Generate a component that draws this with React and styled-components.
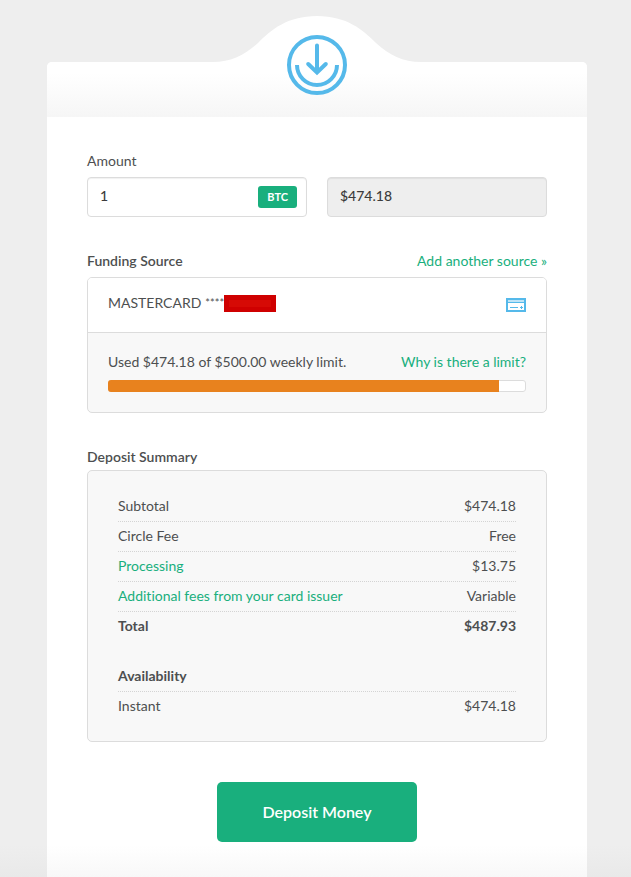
import React, { useState } from 'react';
import styled, { createGlobalStyle } from 'styled-components';

const GlobalStyle = createGlobalStyle`
  * {
    box-sizing: border-box;
  }

  body {
    margin: 0;
    background: #eee;
    color: #4d4f50;
    font-family: Lato, 'Open Sans', sans-serif;
    font-size: 14px;
    font-variant-ligatures: none;
    line-height: 20px;
  }
`;

const Page = styled.div`
  min-height: 100vh;
  padding: 62px 44px 0 47px;
  background: linear-gradient(to top, #e9e9e9, #eee 32px);
`;

const Card = styled.main`
  max-width: 540px;
  min-height: calc(100vh - 62px);
  margin: 0 auto;
  background: linear-gradient(to top, #f8f8f8, #fff 32px);
  border-radius: 5px 5px 0 0;
`;

const CardHeader = styled.header`
  position: relative;
  height: 55px;
  background: linear-gradient(#fff 20%, #f6f6f6);
  border-radius: 5px 5px 0 0;
`;

const Emblem = styled.svg`
  position: absolute;
  top: -46px;
  left: 50%;
  transform: translateX(-50%);
`;

const DepositForm = styled.form`
  display: flex;
  flex-direction: column;
  padding: 34px 40px;
`;

const AmountRow = styled.div`
  display: grid;
  grid-template-columns: repeat(2, minmax(0, 1fr));
  align-items: end;
  gap: 20px;
  margin-bottom: 34px;
`;

const Label = styled.label`
  display: block;
  margin-bottom: 6px;
`;

const Field = styled.div`
  display: flex;
  align-items: center;
  height: 40px;
  padding-right: 9px;
  border: 1px solid #dcdcdc;
  border-radius: 4px;
  background: ${({ $muted }) => ($muted ? '#eee' : '#fff')};
  box-shadow: inset 0 1px 1px rgba(0, 0, 0, 0.06);
`;

const FieldInput = styled.input`
  flex: 1;
  min-width: 0;
  padding: 0 0 2px 12px;
  border: 0;
  outline: 0;
  background: transparent;
  color: #3c3c3c;
  font: inherit;
  font-weight: 500;
`;

const CurrencyButton = styled.button`
  height: 22px;
  padding: 0 9px;
  border: 0;
  border-radius: 3px;
  background: #19af7d;
  color: #fff;
  font: inherit;
  font-size: 11px;
  font-weight: 700;
`;

const SectionHead = styled.div`
  display: flex;
  justify-content: space-between;
  margin-bottom: ${({ $gap }) => $gap}px;
`;

const SectionTitle = styled.h2`
  margin: 0;
  font-size: 14px;
  font-weight: 600;
`;

const TextLink = styled.a`
  color: #19af7d;
  text-decoration: none;
`;

const Panel = styled.section`
  margin-bottom: ${({ $gap }) => $gap}px;
  border: 1px solid #dcdcdc;
  border-radius: 5px;
  background: #f8f8f8;
  overflow: hidden;
`;

const SourceRow = styled.div`
  display: flex;
  align-items: center;
  justify-content: space-between;
  height: 55px;
  padding: 0 20px;
  border-bottom: 1px solid #dcdcdc;
  background: #fff;
`;

const SourceName = styled.div`
  display: flex;
  align-items: center;
  padding-bottom: 4px;
`;

const MaskedDigits = styled.span`
  margin-left: 4px;
  font-size: 11px;
`;

const Redacted = styled.span`
  width: 52px;
  height: 17px;
  border: 5px solid #cf0000;
  background: #d60a05;
`;

const LimitBox = styled.div`
  padding: 19px 20px 20px;
`;

const LimitText = styled.div`
  display: flex;
  justify-content: space-between;
  margin-bottom: 8px;
`;

const Meter = styled.div`
  height: 12px;
  border: 1px solid #dcdcdc;
  border-radius: 3px;
  background: #fff;
`;

const MeterFill = styled.div`
  height: 12px;
  margin: -1px 0 0 -1px;
  border-radius: 3px 0 0 3px;
  background: #e8821e;
`;

const SummaryPanel = styled(Panel)`
  padding: 20px 30px;
`;

const SummaryTable = styled.table`
  width: 100%;
  border-collapse: collapse;

  & + & {
    margin-top: 20px;
  }

  tr + tr {
    border-top: 1px dotted #d4d4d4;
  }
`;

const Cell = styled.td`
  height: 30px;
  padding: 0;
  font-weight: ${({ $strong }) => ($strong ? 700 : 400)};
  text-align: ${({ $end }) => ($end ? 'right' : 'left')};
`;

const SubmitButton = styled.button`
  align-self: center;
  width: 200px;
  height: 60px;
  border: 0;
  border-radius: 5px;
  background: #19af7d;
  color: #fff;
  font: inherit;
  font-size: 16px;
  font-weight: 600;
  cursor: pointer;
`;

const usedPercent = 94;

const fees = [
  { label: 'Subtotal', value: '$474.18' },
  { label: 'Circle Fee', value: 'Free' },
  { label: 'Processing', value: '$13.75', href: '#processing' },
  { label: 'Additional fees from your card issuer', value: 'Variable', href: '#issuer-fees' },
  { label: 'Total', value: '$487.93', strong: true },
];

const availability = [
  { label: 'Availability', value: '', strong: true },
  { label: 'Instant', value: '$474.18' },
];

const DepositEmblem = () => (
  <Emblem width="208" height="84" viewBox="0 0 208 84" fill="none" aria-hidden="true">
    <path
      d="M0 46.5V46C18 46 32 39 45 27C58 14 74 0 104 0C134 0 150 14 163 27C176 39 190 46 208 46V46.5Z"
      fill="#fff"
    />
    <g stroke="#55b9ea" strokeWidth="4">
      <circle cx="104" cy="49" r="28" />
      <path d="M84 49A20 20 0 0 0 124 49" />
      <path d="M104 29.5V56M95.2 48L104 56.5L112.8 48" strokeLinecap="round" />
    </g>
  </Emblem>
);

const CardIcon = () => (
  <svg width="20" height="14" viewBox="0 0 20 14" fill="none" stroke="#55b9ea" aria-hidden="true">
    <path d="M1 1H19V4H1Z" fill="#bfe4f7" stroke="none" />
    <path d="M1 1H19V13H1Z" strokeWidth="2" />
    <path d="M1 4.5H19M4 9.5H12M14 9.5H17M15.5 8V11" />
  </svg>
);

const SummaryRows = ({ rows }) => (
  <SummaryTable>
    <tbody>
      {rows.map(({ label, value, href, strong }) => (
        <tr key={label}>
          <Cell $strong={strong}>{href ? <TextLink href={href}>{label}</TextLink> : label}</Cell>
          <Cell $strong={strong} $end>{value}</Cell>
        </tr>
      ))}
    </tbody>
  </SummaryTable>
);

const App = () => {
  const [amount, setAmount] = useState('1');

  return (
    <>
      <GlobalStyle />
      <Page>
        <Card>
          <CardHeader>
            <DepositEmblem />
          </CardHeader>
          <DepositForm onSubmit={(e) => e.preventDefault()}>
            <AmountRow>
              <div>
                <Label htmlFor="amount">Amount</Label>
                <Field>
                  <FieldInput id="amount" value={amount} onChange={(e) => setAmount(e.target.value)} />
                  <CurrencyButton type="button">BTC</CurrencyButton>
                </Field>
              </div>
              <Field $muted>
                <FieldInput aria-label="Amount in dollars" value="$474.18" readOnly />
              </Field>
            </AmountRow>

            <SectionHead $gap={6}>
              <SectionTitle>Funding Source</SectionTitle>
              <TextLink href="#add-source">Add another source »</TextLink>
            </SectionHead>
            <Panel $gap={34}>
              <SourceRow>
                <SourceName>
                  MASTERCARD
                  <MaskedDigits>****</MaskedDigits>
                  <Redacted />
                </SourceName>
                <CardIcon />
              </SourceRow>
              <LimitBox>
                <LimitText>
                  <span>Used $474.18 of $500.00 weekly limit.</span>
                  <TextLink href="#limit">Why is there a limit?</TextLink>
                </LimitText>
                <Meter role="progressbar" aria-label="Weekly limit used" aria-valuenow={usedPercent}>
                  <MeterFill style={{ width: `${usedPercent}%` }} />
                </Meter>
              </LimitBox>
            </Panel>

            <SectionHead $gap={3}>
              <SectionTitle>Deposit Summary</SectionTitle>
            </SectionHead>
            <SummaryPanel $gap={40}>
              <SummaryRows rows={fees} />
              <SummaryRows rows={availability} />
            </SummaryPanel>

            <SubmitButton type="submit">Deposit Money</SubmitButton>
          </DepositForm>
        </Card>
      </Page>
    </>
  );
};

export default App;
